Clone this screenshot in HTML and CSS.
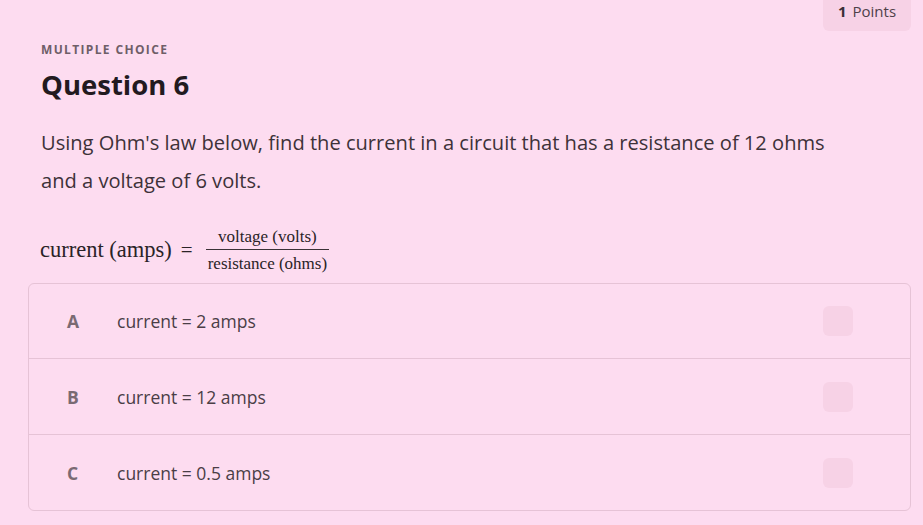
FILE: index.html
```html
<!DOCTYPE html>
<html>
<head>
<meta charset="utf-8">
<link rel="stylesheet" href="styles.css">
</head>
<body>
<div class="page">
  <div class="topbar"><span class="points"><b>1</b> Points</span></div>
  <div class="kind">MULTIPLE CHOICE</div>
  <h1 class="title">Question 6</h1>
  <p class="prompt">Using Ohm's law below, find the current in a circuit that has a resistance of 12 ohms and a voltage of 6 volts.</p>
  <div class="formula">
    <span class="lhs">current (amps)</span>
    <span class="eq">=</span>
    <span class="frac"><span class="num">voltage (volts)</span><span class="den">resistance (ohms)</span></span>
  </div>
  <div class="options">
    <div class="option"><span class="letter">A</span><span class="text">current = 2 amps</span><span class="box"></span></div>
    <div class="option"><span class="letter">B</span><span class="text">current = 12 amps</span><span class="box"></span></div>
    <div class="option"><span class="letter">C</span><span class="text">current = 0.5 amps</span><span class="box"></span></div>
  </div>
</div>
</body>
</html>
```

FILE: styles.css
```css
html, body { margin: 0; padding: 0; }
body {
  background: #fddcf0;
  font-family: "Open Sans", "Noto Sans", sans-serif;
  color: #2b2128;
  width: 923px;
  height: 525px;
  overflow: hidden;
}
.page { padding: 0 12px 0 28px; }
.topbar { display: flex; justify-content: flex-end; height: 31px; }
.points {
  background: #f7d2e6;
  border-radius: 0 0 6px 6px;
  width: 88px;
  display: flex;
  align-items: center;
  justify-content: center;
  font-size: 15px;
  color: #4e4149;
  padding-bottom: 9px;
  box-sizing: border-box;
  height: 31px;
}
.points b { margin-right: 6px; color: #3a2e35; }
.kind {
  margin: 10px 0 0 13px;
  font-size: 12px;
  font-weight: 700;
  letter-spacing: 1.35px;
  color: #6f5e68;
  line-height: 17px;
}
.title {
  margin: 8px 0 0 13px;
  font-size: 27.5px;
  font-weight: 700;
  color: #221a1f;
  line-height: 38px;
}
.prompt {
  margin: 20px 0 0 13px;
  font-size: 20.1px;
  line-height: 38px;
  color: #3d3239;
  width: 810px;
}
.formula {
  margin: 22px 0 0 12px;
  display: flex;
  align-items: center;
  font-family: "Liberation Serif", serif;
  color: #2a2327;
  height: 56px;
}
.lhs { font-size: 22.5px; }
.eq { font-size: 21px; margin: 0 13px 0 9px; }
.frac { display: flex; flex-direction: column; align-items: center; font-size: 17px; }
.num { padding: 0 11px 3px; line-height: 19px; }
.den { border-top: 1.3px solid #3a3236; padding: 4px 2px 0; line-height: 19px; }
.options {
  margin-top: 5px;
  border: 1px solid #e6c3d6;
  border-radius: 6px;
}
.option {
  display: flex;
  align-items: center;
  height: 75px;
  border-top: 1px solid #e6c3d6;
  padding: 0 57px 0 38px;
}
.option:first-child { border-top: none; height: 74px; }
.letter {
  width: 50px;
  font-size: 17.5px;
  font-weight: 700;
  color: #7a6a73;
}
.text { flex: 1; font-size: 17.5px; color: #4a3e46; }
.box {
  width: 30px;
  height: 30px;
  border-radius: 6px;
  background: #f7d2e6;
}
```
